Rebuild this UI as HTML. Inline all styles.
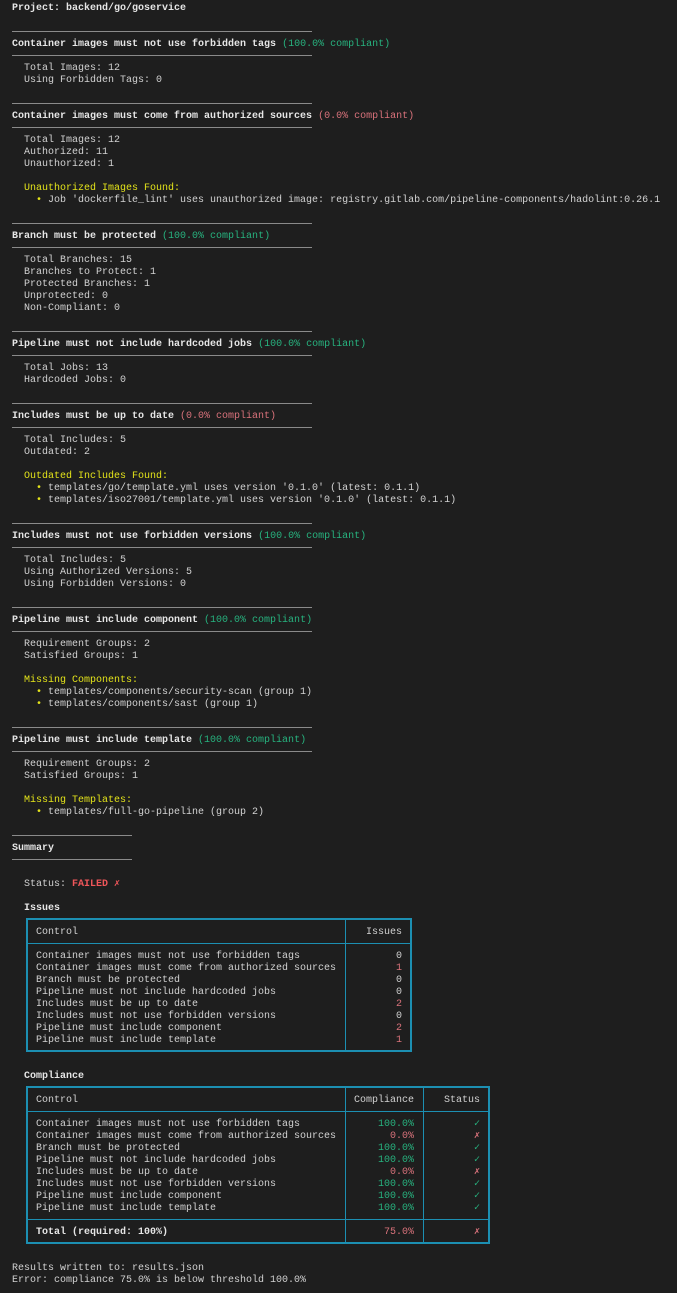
<!DOCTYPE html>
<html><head><meta charset="utf-8"><style>
html,body{margin:0;padding:0;background:#1e1e1e;width:677px;height:1293px;overflow:hidden}
#t{position:absolute;left:12px;top:3px;font:10px/12px "Liberation Mono","DejaVu Sans Mono",monospace;color:#d2d2d2;white-space:pre}
.l{height:12px;position:relative}
.hr{height:12px;position:relative}
.hr:after{content:"";position:absolute;left:0;top:4px;width:300px;height:1px;background:#8a8a8a}
.hr.s:after{width:120px}
b{font-weight:bold;color:#e6e6e6}
.g{color:#27b37f}.r{color:#d9727b}.y{color:#e3e31a}.f{color:#f0565a;font-weight:bold}
.n{position:absolute;left:24px;top:0}
.v{position:absolute;left:0;top:0;text-align:right}
.w1{width:390px}.w2{width:402px}.w3{width:468px}
.box{position:absolute;border:2px solid #1c8fb2;box-sizing:border-box}
.vl{position:absolute;width:1px;background:#1c8fb2}
.hl{position:absolute;height:1px;background:#1c8fb2}
</style></head><body>
<div id="t"><div class="l"><b>Project: backend/go/goservice</b></div><div class="l"></div><div class="hr"></div><div class="l"><b>Container images must not use forbidden tags</b> <span class="g">(100.0% compliant)</span></div><div class="hr"></div><div class="l">  Total Images: 12</div><div class="l">  Using Forbidden Tags: 0</div><div class="l"></div><div class="hr"></div><div class="l"><b>Container images must come from authorized sources</b> <span class="r">(0.0% compliant)</span></div><div class="hr"></div><div class="l">  Total Images: 12</div><div class="l">  Authorized: 11</div><div class="l">  Unauthorized: 1</div><div class="l"></div><div class="l"><span class="y">  Unauthorized Images Found:</span></div><div class="l"><span class="y">    •</span> Job 'dockerfile_lint' uses unauthorized image: registry.gitlab.com/pipeline-components/hadolint:0.26.1</div><div class="l"></div><div class="hr"></div><div class="l"><b>Branch must be protected</b> <span class="g">(100.0% compliant)</span></div><div class="hr"></div><div class="l">  Total Branches: 15</div><div class="l">  Branches to Protect: 1</div><div class="l">  Protected Branches: 1</div><div class="l">  Unprotected: 0</div><div class="l">  Non-Compliant: 0</div><div class="l"></div><div class="hr"></div><div class="l"><b>Pipeline must not include hardcoded jobs</b> <span class="g">(100.0% compliant)</span></div><div class="hr"></div><div class="l">  Total Jobs: 13</div><div class="l">  Hardcoded Jobs: 0</div><div class="l"></div><div class="hr"></div><div class="l"><b>Includes must be up to date</b> <span class="r">(0.0% compliant)</span></div><div class="hr"></div><div class="l">  Total Includes: 5</div><div class="l">  Outdated: 2</div><div class="l"></div><div class="l"><span class="y">  Outdated Includes Found:</span></div><div class="l"><span class="y">    •</span> templates/go/template.yml uses version '0.1.0' (latest: 0.1.1)</div><div class="l"><span class="y">    •</span> templates/iso27001/template.yml uses version '0.1.0' (latest: 0.1.1)</div><div class="l"></div><div class="hr"></div><div class="l"><b>Includes must not use forbidden versions</b> <span class="g">(100.0% compliant)</span></div><div class="hr"></div><div class="l">  Total Includes: 5</div><div class="l">  Using Authorized Versions: 5</div><div class="l">  Using Forbidden Versions: 0</div><div class="l"></div><div class="hr"></div><div class="l"><b>Pipeline must include component</b> <span class="g">(100.0% compliant)</span></div><div class="hr"></div><div class="l">  Requirement Groups: 2</div><div class="l">  Satisfied Groups: 1</div><div class="l"></div><div class="l"><span class="y">  Missing Components:</span></div><div class="l"><span class="y">    •</span> templates/components/security-scan (group 1)</div><div class="l"><span class="y">    •</span> templates/components/sast (group 1)</div><div class="l"></div><div class="hr"></div><div class="l"><b>Pipeline must include template</b> <span class="g">(100.0% compliant)</span></div><div class="hr"></div><div class="l">  Requirement Groups: 2</div><div class="l">  Satisfied Groups: 1</div><div class="l"></div><div class="l"><span class="y">  Missing Templates:</span></div><div class="l"><span class="y">    •</span> templates/full-go-pipeline (group 2)</div><div class="l"></div><div class="hr s"></div><div class="l"><b>Summary</b></div><div class="hr s"></div><div class="l"></div><div class="l">  Status: <span class="f">FAILED ✗</span></div><div class="l"></div><div class="l"><b>  Issues</b></div><div class="l"></div><div class="l"><span class="n">Control</span><span class="v w1">Issues</span></div><div class="l"></div><div class="l"><span class="n">Container images must not use forbidden tags</span><span class="v w1">0</span></div><div class="l"><span class="n">Container images must come from authorized sources</span><span class="v w1 r">1</span></div><div class="l"><span class="n">Branch must be protected</span><span class="v w1">0</span></div><div class="l"><span class="n">Pipeline must not include hardcoded jobs</span><span class="v w1">0</span></div><div class="l"><span class="n">Includes must be up to date</span><span class="v w1 r">2</span></div><div class="l"><span class="n">Includes must not use forbidden versions</span><span class="v w1">0</span></div><div class="l"><span class="n">Pipeline must include component</span><span class="v w1 r">2</span></div><div class="l"><span class="n">Pipeline must include template</span><span class="v w1 r">1</span></div><div class="l"></div><div class="l"></div><div class="l"><b>  Compliance</b></div><div class="l"></div><div class="l"><span class="n">Control</span><span class="v w2">Compliance</span><span class="v w3">Status</span></div><div class="l"></div><div class="l"><span class="n">Container images must not use forbidden tags</span><span class="v w2 g">100.0%</span><span class="v w3 g">✓</span></div><div class="l"><span class="n">Container images must come from authorized sources</span><span class="v w2 r">0.0%</span><span class="v w3 r">✗</span></div><div class="l"><span class="n">Branch must be protected</span><span class="v w2 g">100.0%</span><span class="v w3 g">✓</span></div><div class="l"><span class="n">Pipeline must not include hardcoded jobs</span><span class="v w2 g">100.0%</span><span class="v w3 g">✓</span></div><div class="l"><span class="n">Includes must be up to date</span><span class="v w2 r">0.0%</span><span class="v w3 r">✗</span></div><div class="l"><span class="n">Includes must not use forbidden versions</span><span class="v w2 g">100.0%</span><span class="v w3 g">✓</span></div><div class="l"><span class="n">Pipeline must include component</span><span class="v w2 g">100.0%</span><span class="v w3 g">✓</span></div><div class="l"><span class="n">Pipeline must include template</span><span class="v w2 g">100.0%</span><span class="v w3 g">✓</span></div><div class="l"></div><div class="l"><span class="n"><b>Total (required: 100%)</b></span><span class="v w2 r">75.0%</span><span class="v w3 r">✗</span></div><div class="l"></div><div class="l"></div><div class="l">Results written to: results.json</div><div class="l">Error: compliance 75.0% is below threshold 100.0%</div></div>
<div class="box" style="left:26px;top:918px;width:386px;height:134px"></div>
<div class="vl" style="left:345px;top:919px;height:132px"></div>
<div class="hl" style="left:27px;top:943px;width:384px"></div>
<div class="box" style="left:26px;top:1086px;width:464px;height:158px"></div>
<div class="vl" style="left:345px;top:1087px;height:156px"></div>
<div class="vl" style="left:423px;top:1087px;height:156px"></div>
<div class="hl" style="left:27px;top:1111px;width:462px"></div>
<div class="hl" style="left:27px;top:1219px;width:462px"></div>
</body></html>
